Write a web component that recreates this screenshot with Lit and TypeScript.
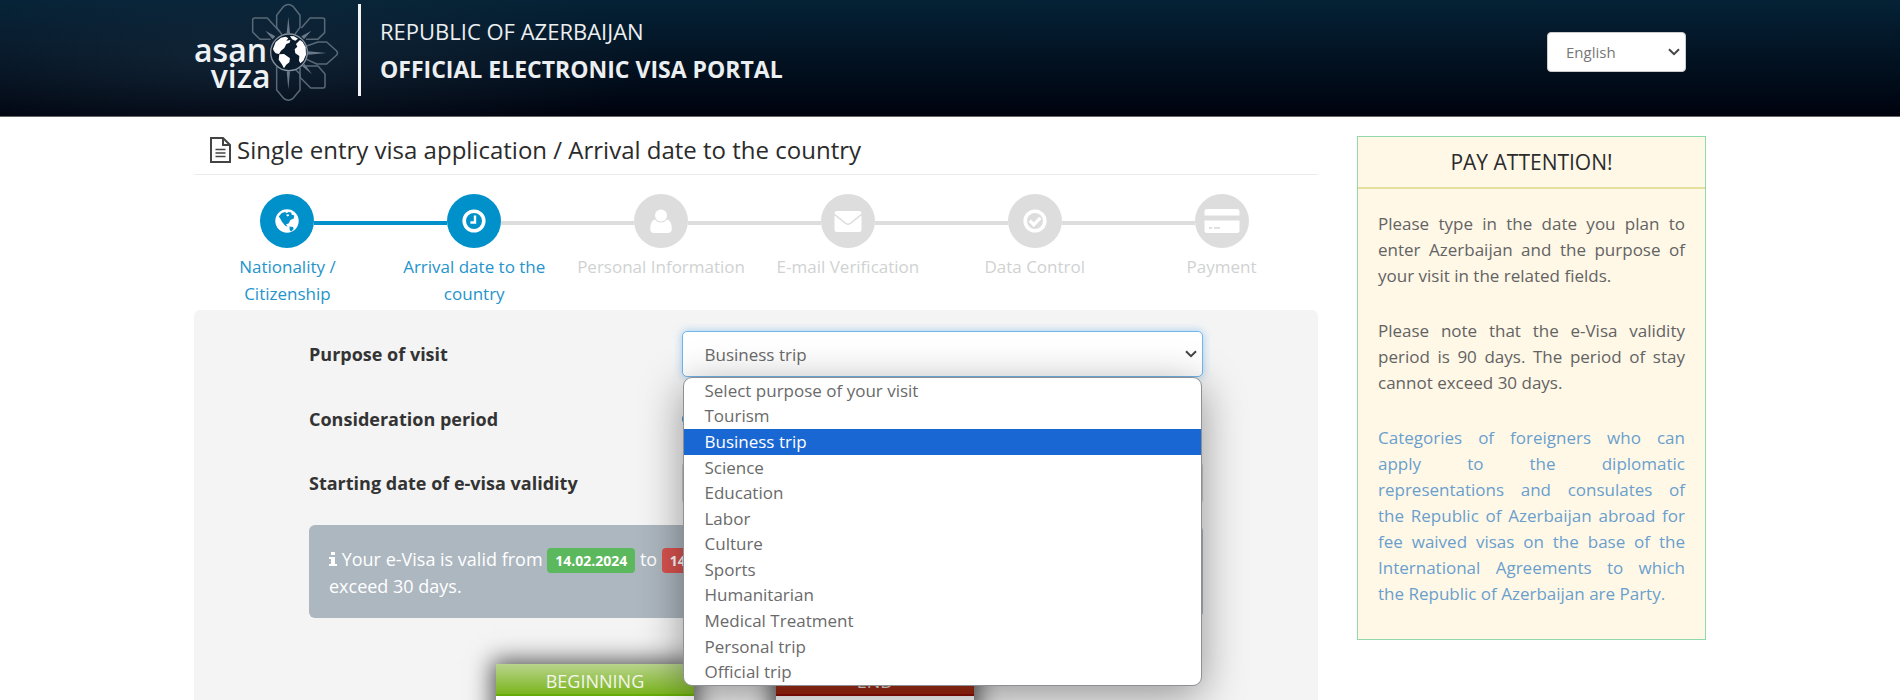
import { LitElement, html, css, svg, nothing } from "lit";
import { customElement, property, state } from "lit/decorators.js";
import { classMap } from "lit/directives/class-map.js";

const icons: Record<string, unknown> = {
  globe: svg`<circle cx="20" cy="20" r="11.7" fill="#fff"/>
    <path fill="#0090ca" d="M11.8 15.5l3-3.6 3.4-.9 1.2 1.2 2.2-1.2 2.6.5.6 2.5 2.4.2-.4 3.2-3.4 1.6-1.6 3.2-2.8 1.2 1.6 2.4-2.4-1-3.4-4.2-1.6-3.1z"/>
    <path fill="#0090ca" d="M22.5 25.5l3.4.6.8 1.8-2.6 2.6-1.4-1.4z"/>
    <path fill="#fff" d="M19 13.8l2.4-.6.8 1.6-1.8.6z"/>`,
  clock: svg`<circle cx="20" cy="20" r="9.8" fill="none" stroke="#fff" stroke-width="3.6"/>
    <path d="M21 14.5v7h-4.6" fill="none" stroke="#fff" stroke-width="2.4"/>`,
  user: svg`<circle cx="20" cy="14.5" r="6" fill="#fff"/>
    <path fill="#fff" d="M14 18.5q2.4 3 6 3t6-3q4.8 1.4 4.8 9.4 0 4.1-4.1 4.1H13.3q-4.1 0-4.1-4.1 0-8 4.8-9.4z"/>`,
  mail: svg`<path fill="#fff" d="M6.5 12.5q0-2.5 2.5-2.5h22q2.5 0 2.5 2.5l-11.2 9q-2.3 1.9-4.6 0z"/>
    <path fill="#fff" d="M6.5 14.5l10.4 8.3q3.1 2.3 6.2 0l10.4-8.3V28.5q0 2.5-2.5 2.5H9q-2.5 0-2.5-2.5z"/>`,
  check: svg`<circle cx="20" cy="20" r="9.8" fill="none" stroke="#fff" stroke-width="3.6"/>
    <path d="M14.8 19.6l4 4.1 6.6-6.8" fill="none" stroke="#fff" stroke-width="3.2"/>`,
  card: svg`<path fill="#fff" d="M2.5 10.5q0-2.5 2.5-2.5h30q2.5 0 2.5 2.5v4h-35z"/>
    <path fill="#fff" fill-rule="evenodd" d="M2.5 19.5h35v10q0 2.5-2.5 2.5H5q-2.5 0-2.5-2.5zM7 26v1.8h3.2V26zm5 0v1.8h6V26z"/>`,
};

const chevron = html`<svg class="chevron" width="12" height="8" viewBox="0 0 12 8" aria-hidden="true">
  <path d="M1 1.2l5 5 5-5" fill="none" stroke="#444" stroke-width="2" />
</svg>`;

const base = css`
  :host {
    display: block;
    box-sizing: border-box;
    font-family: "Open Sans", "Noto Sans", sans-serif;
  }
  *, *::before, *::after { box-sizing: border-box; }
`;

@customElement("visa-logo")
class VisaLogo extends LitElement {
  static styles = [base, css`
    svg { display: block; }
    .word { font-family: "Open Sans", sans-serif; font-weight: 600; font-size: 96px; fill: #eef2f5; }
    .petals { fill: none; stroke: #586977; stroke-width: 4.5; stroke-linejoin: round; }
    .veins { fill: #6a7987; }
  `];
  render() {
    return html`<svg width="150" height="104" viewBox="42 0 450 312" role="img" aria-label="asan viza">
      <g class="petals">
        <path d="M306 104L290 82V46L311 19Q325 8 339 19L360 46V82L344 104" />
        <path d="M272 118H240L218 96V60Q218 54 224 54H262L300 96" />
        <path d="M378 118H413L434 98V60Q434 54 428 54H390L364 84" />
        <path d="M380 138L414 126H440L470 153Q475 159 470 165L440 192H410L380 178" />
        <path d="M378 198H414L435 222V258Q435 264 429 264H392L360 232V204" />
        <path d="M290 200V270L312 296Q325 305 338 296L360 270V222L344 206" />
      </g>
      <g class="veins">
        <path d="M325 50l5 50h-10z" />
        <path d="M256 92l30 17-8 9z" />
        <path d="M394 92l-30 17 8 9z" />
        <path d="M440 159l-56-5v10z" />
        <path d="M396 223l-30-25 8-6z" />
        <path d="M325 268l-5-54h10z" />
      </g>
      <circle cx="327" cy="157" r="55" fill="#0a1b2b" stroke="#8793a0" stroke-width="4" />
      <path fill="#fff" d="M279 146l8-20 16-13 14-3 8 5-6 7 12-2-2 8-10 4-6 12-10 8-6 10-10-2-6-8z" />
      <path fill="#fff" d="M298 163l14-1 18 13-2 12-10 8-6 10-7-13-9-13z" />
      <path fill="#fff" d="M330 108l12 1 12 7-8 6-10-4z" />
      <path fill="#fff" d="M348 132l12-12 8 6 9 16 1 22-8 18-9 8-4-8 1-14-12-8-2-12 8-8z" />
      <text class="word" x="42" y="185">asan</text>
      <text class="word" x="92" y="264">viza</text>
    </svg>`;
  }
}

@customElement("visa-header")
class VisaHeader extends LitElement {
  static styles = [base, css`
    .bar {
      background:
        radial-gradient(ellipse 420px 90px at 240px 60px, rgba(38, 60, 80, 0.4), rgba(38, 60, 80, 0)),
        linear-gradient(#052236, #00030e);
      border-bottom: 1px solid #666;
    }
    .inner {
      max-width: 1512px;
      height: 116px;
      margin: 0 auto;
      padding-right: 20px;
      display: flex;
      align-items: flex-start;
    }
    .rule { width: 3px; height: 92px; margin: 4px 19px 0 14px; background: #f2f4f5; }
    .titles { flex: 1; padding-top: 12px; color: #eceff1; }
    .country, .portal { margin: 0; font-size: 22px; line-height: 38px; }
    .country { font-weight: 400; }
    .portal { font-weight: 700; font-size: 23px; }
    .lang { display: grid; align-items: center; width: 139px; margin-top: 32px; }
    .lang > * { grid-area: 1 / 1; }
    .chevron { justify-self: end; margin-right: 6px; pointer-events: none; }
    select {
      appearance: none;
      width: 100%;
      height: 40px;
      padding: 0 18px;
      border: 1px solid #ccc;
      border-radius: 4px;
      background: #fff;
      color: #777;
      font: 15px "Open Sans", sans-serif;
    }
  `];
  render() {
    return html`<header class="bar"><div class="inner">
      <visa-logo></visa-logo>
      <div class="rule"></div>
      <div class="titles">
        <p class="country">REPUBLIC OF AZERBAIJAN</p>
        <h1 class="portal">OFFICIAL ELECTRONIC VISA PORTAL</h1>
      </div>
      <div class="lang">
        <select aria-label="Language"><option>English</option></select>
        ${chevron}
      </div>
    </div></header>`;
  }
}

@customElement("visa-steps")
class VisaSteps extends LitElement {
  @property({ type: Number }) current = 1;
  private items = [
    ["globe", "Nationality / Citizenship"],
    ["clock", "Arrival date to the country"],
    ["user", "Personal Information"],
    ["mail", "E-mail Verification"],
    ["check", "Data Control"],
    ["card", "Payment"],
  ];
  static styles = [base, css`
    .steps {
      display: grid;
      grid-template-columns: repeat(6, 1fr);
      margin: 0;
      padding: 0 3px 0 0;
      list-style: none;
      height: 116px;
    }
    .step { color: #d0d2d2; text-align: center; font-size: 17px; line-height: 27px; }
    .done { color: #2594cb; }
    .track { display: flex; align-items: center; }
    .line { flex: 1; height: 4px; margin-top: 4px; background: #ddd; }
    .line.on { background: #0090ca; }
    .line.none { background: none; }
    .dot { display: grid; place-items: center; width: 54px; height: 54px; border-radius: 50%; background: #ddd; }
    .done .dot { background: #0090ca; }
    .name { margin-top: 5px; padding: 0 16px; }
    .wide { padding: 0; white-space: nowrap; }
  `];
  render() {
    const last = this.items.length - 1;
    return html`<ol class="steps">${this.items.map(([icon, name], i) => html`
      <li class=${classMap({ step: true, done: i <= this.current })}>
        <div class="track">
          <span class=${classMap({ line: true, none: i === 0, on: i > 0 && i <= this.current })}></span>
          <span class="dot"><svg width="40" height="40" viewBox="0 0 40 40" aria-hidden="true">${icons[icon]}</svg></span>
          <span class=${classMap({ line: true, none: i === last, on: i < this.current })}></span>
        </div>
        <div class=${classMap({ name: true, wide: i > this.current })}>${name}</div>
      </li>`)}</ol>`;
  }
}

@customElement("visa-form")
class VisaForm extends LitElement {
  @state() private purpose = "Business trip";
  @state() private open = true;
  private purposes = [
    "Select purpose of your visit", "Tourism", "Business trip", "Science", "Education", "Labor",
    "Culture", "Sports", "Humanitarian", "Medical Treatment", "Personal trip", "Official trip",
  ];
  static styles = [base, css`
    .panel {
      min-height: 420px;
      padding: 21px 115px 40px;
      border-radius: 6px;
      background: #f4f4f4;
      font-size: 18px;
    }
    form { display: grid; gap: 20px; }
    .row { display: grid; grid-template-columns: 5fr 7fr; align-items: center; min-height: 44px; }
    .label { font-weight: 700; font-size: 18px; line-height: 24px; color: #333; }
    .field { position: relative; display: grid; align-items: center; }
    .field > select, .field > .chevron { grid-area: 1 / 1; }
    .chevron { justify-self: end; margin-right: 6px; pointer-events: none; }
    select, .date {
      appearance: none;
      width: 100%;
      height: 46px;
      padding: 0 22px;
      border: 1px solid #ccc;
      border-radius: 5px;
      background: #fff;
      color: #6a6a6a;
      font: 17px "Open Sans", sans-serif;
    }
    .date { height: 44px; }
    .purpose { border-color: #74b6ea; outline: none; box-shadow: 0 0 9px rgba(102, 175, 233, 0.6); }
    .menu {
      position: absolute;
      top: 46px;
      left: 1px;
      right: 1px;
      z-index: 2;
      height: 309px;
      display: grid;
      grid-auto-rows: 1fr;
      margin: 0;
      padding: 0;
      overflow: hidden;
      list-style: none;
      border: 1px solid #8d9196;
      border-radius: 9px;
      background: #fff;
      box-shadow: 0 10px 44px rgba(0, 0, 0, 0.4);
      color: #6a6a6a;
      font-size: 17px;
      line-height: 24px;
    }
    .menu li { display: flex; align-items: center; padding: 0 21px; }
    .menu .chosen { background: #1967d2; color: #fff; }
    .choices { display: flex; gap: 24px; color: #555; }
    .choices label { display: flex; align-items: center; gap: 8px; line-height: 24px; }
    .choices input { width: 14px; height: 14px; margin: 0; accent-color: #2a8fd6; }
    .note {
      min-height: 93px;
      padding: 21px 20px 18px;
      border-radius: 6px;
      background: #adb7bf;
      color: #fff;
      line-height: 27px;
    }
    .tag { padding: 3px 8px; border-radius: 4px; font-weight: 700; font-size: 14px; line-height: 24px; }
    .green { background: #5cb85c; }
    .red { background: #d9534f; }
    .pages { display: flex; justify-content: center; gap: 82px; padding: 26px 42px 0 0; }
    .page { width: 198px; box-shadow: 0 0 22px 4px rgba(0, 0, 0, 0.65); background: #fff; text-align: center; }
    .cap { height: 32px; color: #f3f5ee; line-height: 34px; }
    .start { background: linear-gradient(#b9d48d, #7cb61f 93%, #68ab08 94%); }
    .end { background: linear-gradient(#c5533b, #a0260d 93%, #900e08 94%); }
    .day { height: 90px; font-size: 60px; line-height: 110px; color: #333; }
  `];
  private pick(value: string) {
    this.purpose = value;
    this.open = false;
  }
  render() {
    return html`<section class="panel"><form>
      <div class="row">
        <label class="label" for="purpose">Purpose of visit</label>
        <div class="field">
          <select id="purpose" class="purpose" .value=${this.purpose}>
            ${this.purposes.map((p) => html`<option ?selected=${p === this.purpose}>${p}</option>`)}
          </select>
          ${chevron}
          ${this.open ? html`<ul class="menu" role="listbox" aria-label="Purpose of visit">
            ${this.purposes.map((p) => html`<li role="option" aria-selected=${p === this.purpose}
              class=${classMap({ chosen: p === this.purpose })} @click=${() => this.pick(p)}>${p}</li>`)}
          </ul>` : nothing}
        </div>
      </div>
      <div class="row">
        <span class="label" id="period">Consideration period</span>
        <div class="choices" role="radiogroup" aria-labelledby="period">
          <label><input type="radio" name="period" checked />Standard</label>
          <label><input type="radio" name="period" />Urgent</label>
        </div>
      </div>
      <div class="row">
        <label class="label" for="start">Starting date of e-visa validity</label>
        <input class="date" id="start" type="text" value="14.02.2024" />
      </div>
      <div class="note">
        <svg width="8" height="14" viewBox="0 0 8 14" aria-hidden="true">
          <path fill="#fff" d="M2 0h4v3H2zM0 5h6v7h2v2H0v-2h2V7H0z" />
        </svg>
        Your e-Visa is valid from <span class="tag green">14.02.2024</span> to
        <span class="tag red">14.05.2024</span> . The period of your stay in the country cannot exceed&nbsp;30&nbsp;days.
      </div>
      <div class="pages">
        <div class="page"><div class="cap start">BEGINNING</div><div class="day">14</div></div>
        <div class="page"><div class="cap end">END</div><div class="day">14</div></div>
      </div>
    </form></section>`;
  }
}

@customElement("visa-notice")
class VisaNotice extends LitElement {
  static styles = [base, css`
    .box { min-height: 504px; border: 1px solid #92d8ad; background: #fff8e7; }
    .title {
      margin: 0;
      border-bottom: 2px solid #e4df9c;
      font-size: 21px;
      font-weight: 500;
      line-height: 50px;
      text-align: center;
      color: #2b2b2b;
    }
    .body {
      display: grid;
      gap: 29px;
      padding: 22px 20px;
      font-size: 17px;
      line-height: 26px;
      text-align: justify;
      color: #636363;
    }
    p { margin: 0; }
    a { color: #6a9fcd; text-decoration: none; }
  `];
  render() {
    return html`<aside class="box">
      <h2 class="title">PAY ATTENTION!</h2>
      <div class="body">
        <p>Please type in the date you plan to enter Azerbaijan and the purpose of your visit in the related fields.</p>
        <p>Please note that the e-Visa validity period is 90 days. The period of stay cannot exceed 30 days.</p>
        <p><a href="#categories">Categories of foreigners who can apply to the diplomatic representations and consulates of the&nbsp;Republic of Azerbaijan abroad for fee waived visas on the base of the International Agreements to which the&nbsp;Republic of Azerbaijan are Party.</a></p>
      </div>
    </aside>`;
  }
}

@customElement("app-root")
class AppRoot extends LitElement {
  static styles = [base, css`
    :host { height: 100vh; overflow: hidden; background: #fff; }
    .content {
      max-width: 1512px;
      margin: 0 auto;
      display: grid;
      grid-template-columns: minmax(0, 1fr) 349px;
      align-items: start;
      gap: 39px;
      padding-top: 19px;
    }
    .heading {
      display: flex;
      align-items: center;
      gap: 6px;
      margin: 0 0 19px;
      padding: 1px 16px 11px;
      border-bottom: 1px solid #ececec;
      font-size: 24px;
      font-weight: 500;
      line-height: 26px;
      color: #2b2b2b;
    }
  `];
  render() {
    return html`
      <visa-header></visa-header>
      <div class="content">
        <main>
          <h2 class="heading">
            <svg width="21" height="26" viewBox="0 0 21 26" fill="none" stroke="#444" stroke-width="2" aria-hidden="true">
              <path d="M1 1h12l7 7v17H1zM13 1v7h7" />
              <path d="M5.5 12.5h10M5.5 16h10M5.5 19.5h10" stroke-width="1.6" />
            </svg>
            Single entry visa application / Arrival date to the country
          </h2>
          <visa-steps></visa-steps>
          <visa-form></visa-form>
        </main>
        <visa-notice></visa-notice>
      </div>`;
  }
}
